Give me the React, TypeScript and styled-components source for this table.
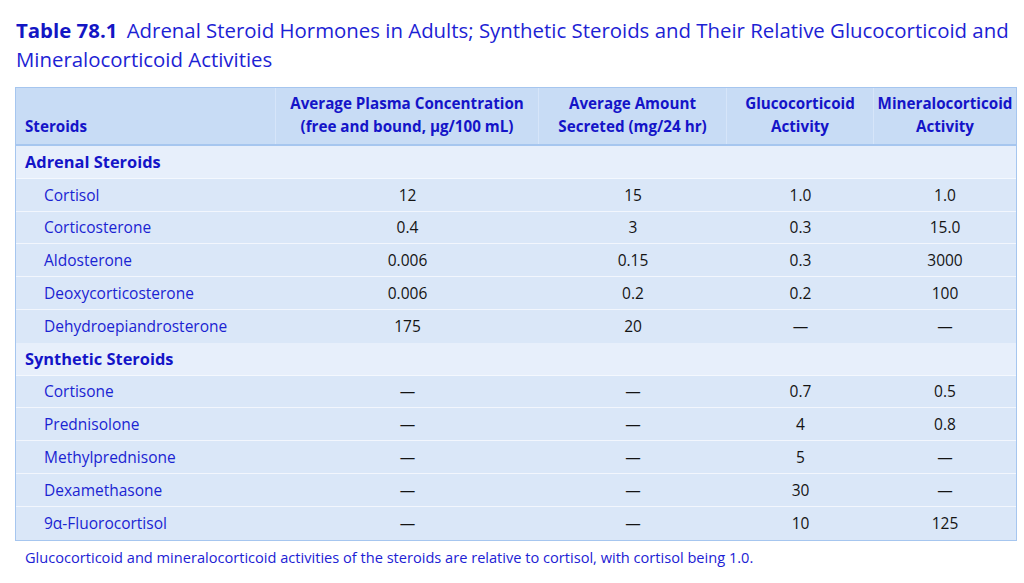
import styled, { createGlobalStyle } from "styled-components";

type Row = { name: string; values: string[] };
type Section = { title: string; rows: Row[] };

const sections: Section[] = [
  {
    title: "Adrenal Steroids",
    rows: [
      { name: "Cortisol", values: ["12", "15", "1.0", "1.0"] },
      { name: "Corticosterone", values: ["0.4", "3", "0.3", "15.0"] },
      { name: "Aldosterone", values: ["0.006", "0.15", "0.3", "3000"] },
      { name: "Deoxycorticosterone", values: ["0.006", "0.2", "0.2", "100"] },
      { name: "Dehydroepiandrosterone", values: ["175", "20", "—", "—"] },
    ],
  },
  {
    title: "Synthetic Steroids",
    rows: [
      { name: "Cortisone", values: ["—", "—", "0.7", "0.5"] },
      { name: "Prednisolone", values: ["—", "—", "4", "0.8"] },
      { name: "Methylprednisone", values: ["—", "—", "5", "—"] },
      { name: "Dexamethasone", values: ["—", "—", "30", "—"] },
      { name: "9α-Fluorocortisol", values: ["—", "—", "10", "125"] },
    ],
  },
];

function App() {
  return (
    <Page>
      <GlobalStyle />
      <Title>
        <Label>Table 78.1</Label> Adrenal Steroid Hormones in Adults; Synthetic
        Steroids and Their Relative Glucocorticoid and Mineralocorticoid Activities
      </Title>
      <Table>
        <HeadRow>
          <HeadCell $left>Steroids</HeadCell>
          <HeadCell>
            Average Plasma Concentration
            <br />
            (free and bound, μg/100 mL)
          </HeadCell>
          <HeadCell>
            Average Amount
            <br />
            Secreted (mg/24 hr)
          </HeadCell>
          <HeadCell>
            Glucocorticoid
            <br />
            Activity
          </HeadCell>
          <HeadCell $last>
            Mineralocorticoid
            <br />
            Activity
          </HeadCell>
        </HeadRow>
        {sections.map((s) => (
          <div key={s.title}>
            <SectionRow>{s.title}</SectionRow>
            {s.rows.map((r) => (
              <DataRow key={r.name}>
                <Name>{r.name}</Name>
                {r.values.map((v, i) => (
                  <Value key={i}>{v}</Value>
                ))}
              </DataRow>
            ))}
          </div>
        ))}
      </Table>
      <Note>
        Glucocorticoid and mineralocorticoid activities of the steroids are relative
        to cortisol, with cortisol being 1.0.
      </Note>
    </Page>
  );
}

export default App;

const GlobalStyle = createGlobalStyle`
  body {
    margin: 0;
    background: #fff;
    font-family: "Open Sans", "Noto Sans", sans-serif;
  }
`;

const Page = styled.div`
  width: 1024px;
  height: 583px;
  padding: 16px 0 0 15px;
  box-sizing: border-box;
  overflow: hidden;
`;

const Title = styled.h1`
  margin: 0 0 13px 1px;
  width: 1005px;
  font-size: 20.4px;
  line-height: 29px;
  font-weight: 400;
  color: #1c22d4;
`;

const Label = styled.span`
  font-weight: 700;
  color: #1416c4;
  padding-right: 4px;
`;

const Table = styled.div`
  width: 1002px;
  border: 1.5px solid #a6c6ef;
  box-sizing: border-box;
`;

const cols = "260px 263px 188px 147px 1fr";

const HeadRow = styled.div`
  display: grid;
  grid-template-columns: ${cols};
  background: #c8dcf5;
  border-bottom: 2px solid #a6c6ef;
`;

const HeadCell = styled.div<{ $left?: boolean; $last?: boolean }>`
  display: flex;
  align-items: flex-end;
  justify-content: ${(p) => (p.$left ? "flex-start" : "center")};
  text-align: ${(p) => (p.$left ? "left" : "center")};
  padding: ${(p) => (p.$left ? "5px 0 6px 9px" : "5px 0 6px")};
  height: 56px;
  box-sizing: border-box;
  font-size: 15.2px;
  line-height: 23px;
  font-weight: 700;
  color: #1414c8;
  white-space: nowrap;
  border-right: ${(p) => (p.$last ? "none" : "1px solid #d6e5f9")};
`;

const SectionRow = styled.div`
  height: 32.8px;
  box-sizing: border-box;
  padding-left: 9px;
  display: flex;
  align-items: center;
  background: #e7effb;
  border-bottom: 1px solid #f4f8fe;
  font-size: 16.4px;
  font-weight: 700;
  color: #1414c8;
`;

const DataRow = styled.div`
  display: grid;
  grid-template-columns: ${cols};
  height: 32.8px;
  box-sizing: border-box;
  align-items: center;
  background: #dae7f8;
  border-bottom: 1px solid #f2f6fd;

  &:last-child {
    border-bottom: none;
  }
`;

const Name = styled.div`
  padding-left: 28px;
  font-size: 15.5px;
  color: #1a24d2;
`;

const Value = styled.div`
  text-align: center;
  font-size: 15.5px;
  color: #141414;
`;

const Note = styled.p`
  margin: 6px 0 0 10px;
  font-size: 14.6px;
  line-height: 20px;
  color: #1c22d4;
`;
